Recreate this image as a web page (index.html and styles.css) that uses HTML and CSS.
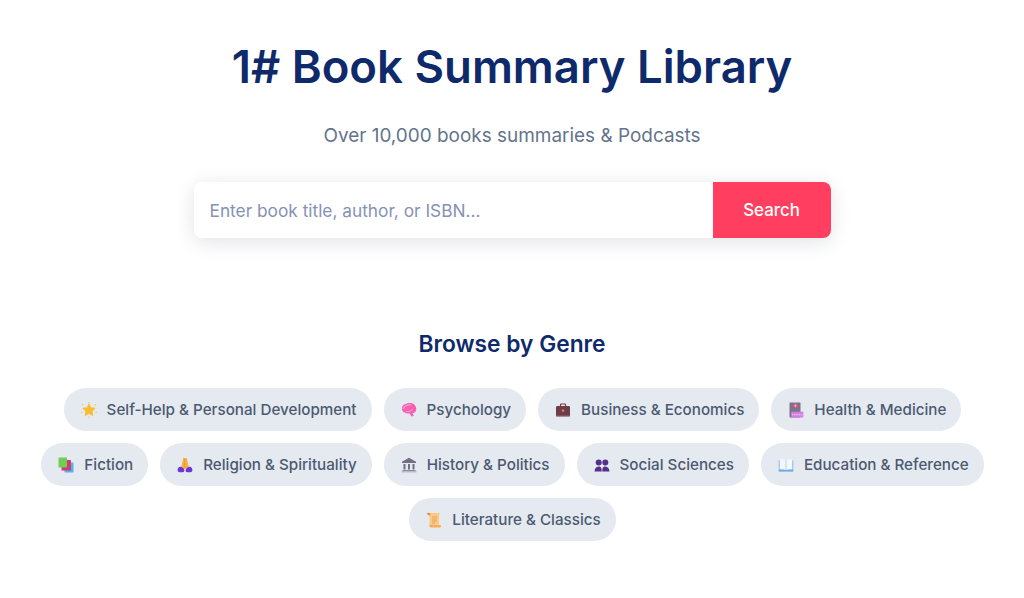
FILE: index.html
```html
<!DOCTYPE html>
<html lang="en">
<head>
<meta charset="utf-8">
<title>1# Book Summary Library</title>
<link rel="stylesheet" href="styles.css">
</head>
<body>
<main class="page">
  <section class="hero">
    <h1 class="title">1# Book Summary Library</h1>
    <p class="subtitle">Over 10,000 books summaries &amp; Podcasts</p>
    <form class="search">
      <input class="search-input" type="text" placeholder="Enter book title, author, or ISBN...">
      <button class="search-button" type="button">Search</button>
    </form>
  </section>
  <section class="genres">
    <h2 class="genres-title">Browse by Genre</h2>
    <div class="pills">
      <a class="pill"><svg class="icon" viewBox="0 0 16 16"><path d="M8 1.800l1.900 3.900 4.300.6-3.100 3 .7 4.300L8 11.600l-3.800 2 .7-4.300-3.100-3 4.300-.6z" fill="#f8bc32" stroke="#f8bc32" stroke-width=".8" stroke-linejoin="round"/><g fill="#f8c44e"><rect x="1" y="2" width="1.300" height="1.300"/><rect x="13.700" y="2" width="1.300" height="1.300"/><rect x=".2" y="9.800" width="1.200" height="1.200"/><rect x="14.600" y="9.800" width="1.200" height="1.200"/><rect x="7.400" y="14.600" width="1.200" height="1.200"/><rect x="7.400" y=".1" width="1.200" height="1"/></g></svg>Self-Help &amp; Personal Development</a>
      <a class="pill"><svg class="icon" viewBox="0 0 16 16"><path d="M6 1.600c2.800-1 6-.4 7.700 1.400 1.700 1.700 2 4.600.9 6.400-.8 1.200-2.100 1.700-3.100 1.700l1.300 2.800-2.300.5-2-3.100c-1.900.6-3.700.2-4.900-.8C1.800 9.800.5 8.100.9 6c.3-2.300 2.500-4 5.100-4.400z" fill="#f65fb2"/><path d="M2 6.500c1.800-2.400 5-3.900 8-3.700M5.500 9.500c2 .5 4.500-.3 6-1.900" fill="none" stroke="#fb93d0" stroke-width="1.300" stroke-linecap="round"/></svg>Psychology</a>
      <a class="pill"><svg class="icon" viewBox="0 0 16 16"><path d="M5.500 4.500V2.800c0-.5.400-.8.800-.8h3.400c.4 0 .8.300.8.800v1.700" fill="none" stroke="#6d3a45" stroke-width="1.200"/><rect x="1" y="4" width="14" height="10.500" rx="1.200" fill="#6f3d49"/><rect x="1" y="13.700" width="14" height=".9" fill="#a98c92"/><rect x="6.800" y="7.600" width="2.400" height="2" fill="#e58a52"/></svg>Business &amp; Economics</a>
      <a class="pill"><svg class="icon" viewBox="0 0 16 16"><rect x="1.500" y=".5" width="11" height="15" rx=".8" fill="#7b7488"/><rect x="3.300" y="9.800" width="12" height="5.700" rx=".5" fill="#d77ce6"/><path d="M3.800 12.700h11" stroke="#f4d4f5" stroke-width=".9" stroke-dasharray="1.500 .7"/><circle cx="7.500" cy="3.700" r="2.200" fill="#f0508f"/><path d="M7.500 2.600v2.200M6.400 3.700h2.200" stroke="#ffc2d8" stroke-width=".7"/></svg>Health &amp; Medicine</a>
      <a class="pill"><svg class="icon" viewBox="0 0 16 16"><rect x="6.500" y="5.500" width="9" height="10" rx=".6" fill="#51b5f0"/><rect x="3.500" y="3" width="9.500" height="10.500" rx=".6" fill="#d43a72"/><rect x=".5" y=".5" width="8.500" height="10" rx=".6" fill="#6fce55"/></svg>Fiction</a>
      <a class="pill"><svg class="icon" viewBox="0 0 16 16"><path d="M6.200 1h3.600l1.500 7.500 1.400 3.300H3.300l1.400-3.300z" fill="#f9ae3f"/><path d="M7.700 2v9.500" stroke="#dd8a28" stroke-width=".5"/><path d="M.6 13c0-2 1.500-3.500 3-3.200 1.600.3 3.800 2 3.800 3.400 0 1.200-.7 2-1.900 2H2.600C1.300 15.200.6 14.300.6 13zM15.400 13c0-2-1.500-3.500-3-3.200-1.600.3-3.800 2-3.800 3.400 0 1.200.7 2 1.900 2h2.900c1.300 0 2-.9 2-2.200z" fill="#6a35d9"/></svg>Religion &amp; Spirituality</a>
      <a class="pill"><svg class="icon" viewBox="0 0 16 16"><path d="M8 .8L15 4.800v1.200H1V4.800z" fill="#736e86"/><path d="M2.500 7h2v5.500h-2zM7 7h2v5.500H7zM11.500 7h2v5.500h-2z" fill="#736e86"/><rect x="1.500" y="13" width="13" height="1" fill="#8d889e"/><rect x=".6" y="14.200" width="14.800" height="1.200" fill="#b5aebf"/></svg>History &amp; Politics</a>
      <a class="pill"><svg class="icon" viewBox="0 0 16 16"><g fill="#55308d"><circle cx="4.700" cy="5.600" r="3"/><circle cx="11.300" cy="5.600" r="3"/><path d="M.6 14.600c0-3 1.400-5.200 4.100-5.200s3 2.200 3 5.200zM8.300 14.600c0-3 .3-5.200 3-5.200s4.100 2.200 4.100 5.200z"/></g></svg>Social Sciences</a>
      <a class="pill"><svg class="icon" viewBox="0 0 16 16"><path d="M.7 3.300h14.600v10.200H.7z" fill="#7fbdf0"/><path d="M1.700 2.500c2.300-.3 4.900-.2 6 .7v9.700c-1.300-.7-3.700-.9-6-.6zM14.300 2.500c-2.300-.3-4.900-.2-6 .7v9.700c1.300-.7 3.700-.9 6-.6z" fill="#f4f6fb"/><rect x=".7" y="13.300" width="14.600" height="1.200" fill="#4f9be0"/></svg>Education &amp; Reference</a>
      <a class="pill"><svg class="icon" viewBox="0 0 16 16"><path d="M3.500 1h10.500l-.9 1.500v10.500l-9.600.7z" fill="#fbcb85"/><path d="M1 1.300c1.300-.8 2.800-.5 3.300.3V3.500L1.800 3z" fill="#e38c3f"/><path d="M3.300 13h11.500c.3 1 .1 2-.5 2.400H4.800c-1 0-1.700-1.300-1.500-2.400z" fill="#f5ad5c"/><path d="M6 5h5M6 7h5M6 9h5M6 11h3" stroke="#df9a4e" stroke-width=".8"/></svg>Literature &amp; Classics</a>
    </div>
  </section>
</main>
</body>
</html>
```

FILE: styles.css
```css
* {
  box-sizing: border-box;
}

html,
body {
  margin: 0;
  background: #fff;
}

body {
  font-family: Inter, "Liberation Sans", sans-serif;
  overflow: hidden;
}

.page {
  display: flex;
  flex-direction: column;
  align-items: center;
  padding: 32px 32px 0;
}

.hero {
  display: flex;
  flex-direction: column;
  align-items: center;
  width: 100%;
}

.title {
  margin: 0;
  font-size: 45.5px;
  line-height: 70px;
  font-weight: 600;
  color: #0f2a6b;
}

.subtitle {
  margin: 20px 0 0;
  font-size: 18.95px;
  line-height: 27px;
  color: #64748b;
}

.search {
  display: flex;
  width: 637px;
  height: 56px;
  margin-top: 33px;
  border-radius: 8px;
  background: #fff;
  box-shadow: 0 4px 20px rgba(15, 23, 42, 0.12);
  overflow: hidden;
}

.search-input {
  flex: 1;
  min-width: 0;
  border: 0;
  outline: 0;
  padding: 0 16px;
  font: 400 17.3px Inter, "Liberation Sans", sans-serif;
  color: #334155;
  background: #fff;
}

.search-input::placeholder {
  color: #8492b4;
  opacity: 1;
}

.search-button {
  width: 118px;
  border: 0;
  padding: 0;
  font: 500 16.9px Inter, "Liberation Sans", sans-serif;
  color: #fff;
  background: #ff3e60;
}

.genres {
  display: flex;
  flex-direction: column;
  align-items: center;
  width: 100%;
  margin-top: 90px;
}

.genres-title {
  margin: 0;
  font-size: 22.75px;
  line-height: 32px;
  font-weight: 600;
  color: #0f2a6b;
}

.pills {
  display: flex;
  flex-wrap: wrap;
  justify-content: center;
  gap: 12px;
  margin-top: 28px;
  width: 100%;
  padding-left: 1px;
}

.pill {
  display: flex;
  align-items: center;
  gap: 10px;
  height: 43px;
  padding: 0 15px 0 17px;
  border-radius: 22px;
  background: #e5e9f0;
  font-size: 15.2px;
  font-weight: 500;
  color: #4b5a70;
}

.icon {
  flex: none;
  width: 16px;
  height: 16px;
}
```
